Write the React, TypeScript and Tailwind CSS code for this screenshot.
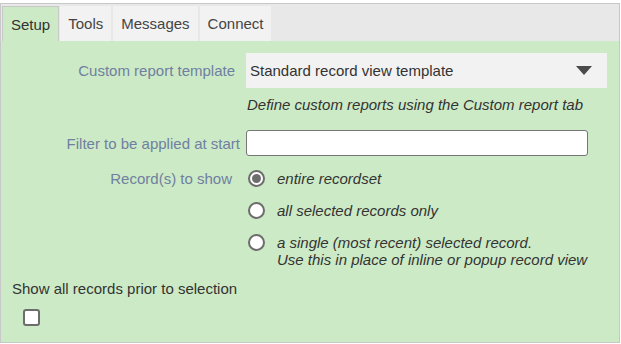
import type { ReactNode } from "react";

const LABEL = "text-[#6f80a0]";

function Radio({ checked }: { checked?: boolean }) {
  return (
    <span className="flex h-[17px] w-[17px] shrink-0 items-center justify-center rounded-full border-2 border-[#6d6d6d] bg-white">
      {checked ? <span className="h-[9px] w-[9px] rounded-full bg-[#6d6d6d]" /> : null}
    </span>
  );
}

function Row({ label, pr, children, className }: { label: string; pr: string; children: ReactNode; className?: string }) {
  return (
    <div className={"flex " + (className ?? "")}>
      <div className={"w-[245px] shrink-0 text-right " + LABEL + " " + pr}>{label}</div>
      <div className="min-w-0 flex-1">{children}</div>
    </div>
  );
}

export default function App() {
  const tabs = ["Setup", "Tools", "Messages", "Connect"];
  return (
    <div className="h-[344px] w-[621px] bg-white pt-[3px] font-['Liberation_Sans',Arial,sans-serif] text-[15px] leading-[17px] text-[#333]">
      <div className="flex h-[340px] w-[620px] flex-col border border-[#c8c8c8]">
        <div className="flex h-[37px] shrink-0 items-end gap-[2px] bg-[#e8e8e8] pl-[1px]">
          {tabs.map((t, i) =>
            i === 0 ? (
              <div key={t} className="mr-[-1px] flex h-[35px] items-center border border-b-0 border-[#c8c8c8] bg-[#cdeac6] px-2 text-[#333]">
                {t}
              </div>
            ) : (
              <div key={t} className="flex h-[35px] items-center bg-[#f2f2f2] px-2 text-[#444]">
                {t}
              </div>
            )
          )}
        </div>
        <div className="flex-1 bg-[#cdeac6] pt-[12px]">
          <Row label="Custom report template" pr="pr-[11px]" className="items-center">
            <div className="flex h-[35px] w-[361px] items-center justify-between bg-[#f2f2f2] pl-[4px] pr-[15px] text-[#333]">
              <span>Standard record view template</span>
              <svg width="16" height="10" viewBox="0 0 16 10" className="mt-[1px]">
                <path d="M0 0 L16 0 L8 9 Z" fill="#4a4a4a" />
              </svg>
            </div>
          </Row>
          <Row label="" pr="" className="mt-[8px]">
            <div className="pl-[1px] italic text-[#333]">Define custom reports using the Custom report tab</div>
          </Row>
          <Row label="Filter to be applied at start" pr="pr-[6px]" className="mt-[17px] items-center">
            <div className="h-[26px] w-[342px] rounded-[3px] border border-[#767676] bg-white" />
          </Row>
          <Row label="Record(s) to show" pr="pr-[14px]" className="mt-[14px]">
            <div className="flex flex-col gap-[15px] pl-[2px]">
              <div className="flex items-start gap-[12px]">
                <Radio checked />
                <span className="italic">entire recordset</span>
              </div>
              <div className="flex items-start gap-[12px]">
                <Radio />
                <span className="italic">all selected records only</span>
              </div>
              <div className="flex items-start gap-[12px]">
                <Radio />
                <span className="italic">
                  a single (most recent) selected record.
                  <br />
                  Use this in place of inline or popup record view
                </span>
              </div>
            </div>
          </Row>
          <div className="mt-[12px] pl-[11px] text-[#333]">Show all records prior to selection</div>
          <div className="mt-[12px] pl-[22px]">
            <span className="block h-[17px] w-[17px] rounded-[3px] border-2 border-[#6d6d6d] bg-white" />
          </div>
        </div>
      </div>
    </div>
  );
}
